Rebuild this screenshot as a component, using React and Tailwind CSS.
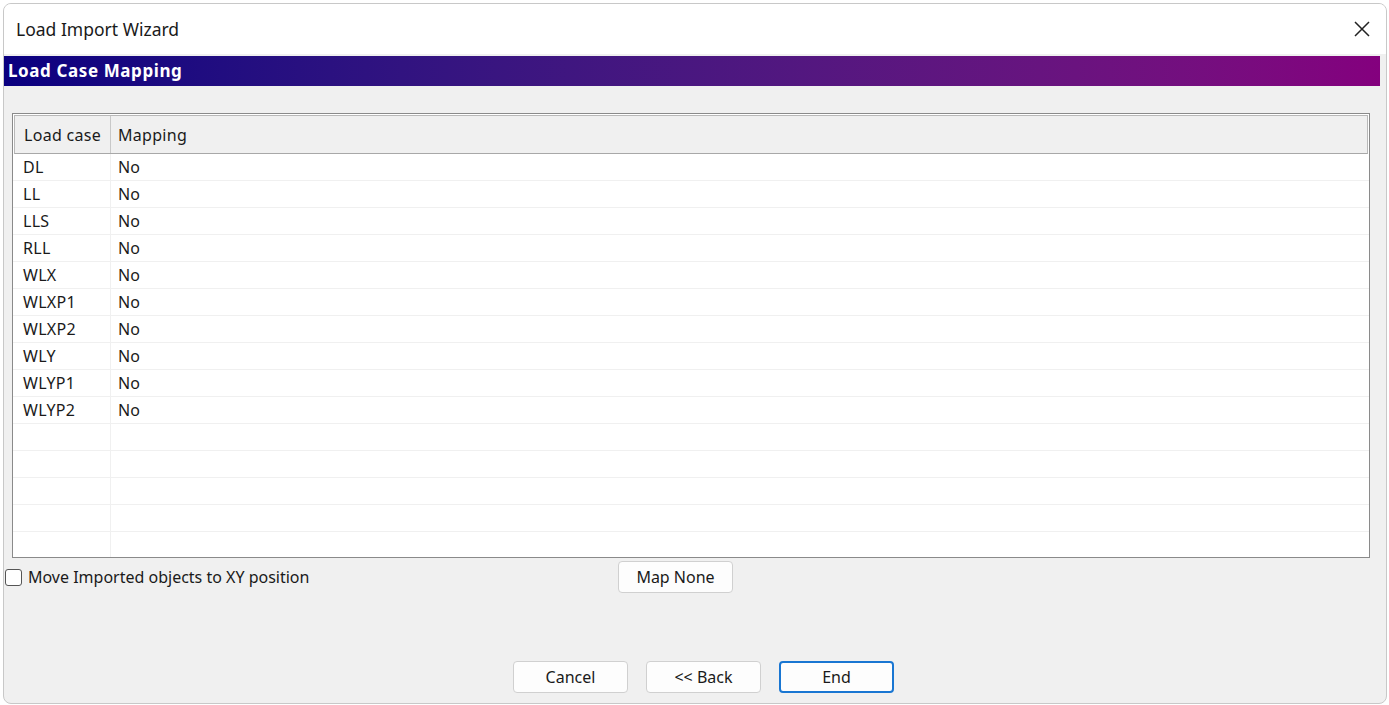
import React from 'react';

const ROWS = ['DL', 'LL', 'LLS', 'RLL', 'WLX', 'WLXP1', 'WLXP2', 'WLY', 'WLYP1', 'WLYP2', '', '', '', '', ''];

function Btn({ children, primary, className = '' }) {
  return (
    <button
      className={`w-[115px] h-[32px] rounded-[4px] bg-[#fdfdfd] text-[16px] text-[#1a1a1a] ${
        primary ? 'border-2 border-[#1976d2]' : 'border border-[#d0d0d0]'
      } ${className}`}
    >
      {children}
    </button>
  );
}

export default function App() {
  return (
    <div className="w-[1389px] h-[705px] bg-white overflow-hidden" style={{ fontFamily: '"Noto Sans", "Open Sans", sans-serif' }}>
      <div className="ml-[3px] mt-[3px] w-[1384px] h-[701px] rounded-[8px] border border-[#c8c8c8] bg-[#f0f0f0] flex flex-col overflow-hidden">
        {/* Title bar */}
        <div className="h-[50px] bg-white flex items-center justify-between pl-[12px] pr-[14px] shrink-0">
          <span className="text-[17.5px] text-[#1a1a1a]">Load Import Wizard</span>
          <svg width="18" height="18" viewBox="0 0 18 18" className="mr-[1px]">
            <path d="M2 2 L16 16 M16 2 L2 16" stroke="#222" strokeWidth="1.5" />
          </svg>
        </div>
        {/* Section header */}
        <div className="mt-[2px] h-[30px] w-[1376px] bg-gradient-to-r from-[#0a0080] to-[#84007e] flex items-center pl-[4px] shrink-0">
          <span className="text-[17px] font-bold tracking-[0.6px] text-white">Load Case Mapping</span>
        </div>

        {/* Table */}
        <div className="mt-[27px] ml-[8px] w-[1358px] h-[445px] border border-[#8a8a8a] bg-white shrink-0 overflow-hidden">
          <div className="flex h-[39px] mt-[1px] w-[1354px] ml-[1px] bg-[#f0f0f0] border border-[#b8b8b8] border-b-[#a8a8a8]">
            <div className="w-[96px] border-r border-[#c8c8c8] flex items-center pl-[9px] text-[16px] tracking-[0.3px] text-[#1a1a1a]">Load case</div>
            <div className="flex-1 flex items-center pl-[7px] text-[16px] tracking-[0.3px] text-[#1a1a1a]">Mapping</div>
          </div>
          {ROWS.map((r, i) => (
            <div key={i} className="flex h-[27px] border-b border-[#f0f0f0]">
              <div className="w-[98px] border-r border-[#f0f0f0] flex items-center pl-[10px] text-[16px] tracking-[0.3px] text-[#1a1a1a]">{r}</div>
              <div className="flex-1 flex items-center pl-[7px] text-[16px] text-[#1a1a1a]">{r ? 'No' : ''}</div>
            </div>
          ))}
        </div>

        {/* Options row */}
        <div className="relative h-[40px] shrink-0">
          <label className="absolute left-[1px] top-[7px] flex items-center gap-[6px]">
            <span className="w-[17px] h-[17px] rounded-[3px] border border-[#555] bg-white" />
            <span className="text-[16px] text-[#1a1a1a]">Move Imported objects to XY position</span>
          </label>
          <div className="absolute left-[614px] top-[3px]">
            <Btn className="h-[32px] text-[15.5px]">Map None</Btn>
          </div>
        </div>

        {/* Footer buttons */}
        <div className="flex-1 flex items-end justify-start pb-[10px] pl-[509px] gap-[18px]">
          <Btn>Cancel</Btn>
          <Btn>&lt;&lt; Back</Btn>
          <Btn primary>End</Btn>
        </div>
      </div>
    </div>
  );
}
